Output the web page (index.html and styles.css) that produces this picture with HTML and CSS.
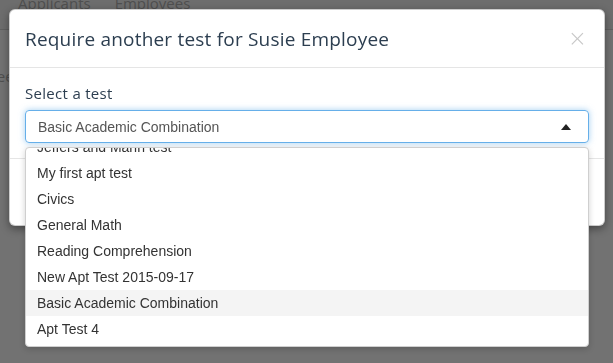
FILE: index.html
```html
<!DOCTYPE html>
<html>
<head>
<meta charset="utf-8">
<link rel="stylesheet" href="styles.css">
</head>
<body>
<div class="page">
  <div class="nav">
    <span class="tab">Applicants</span>
    <span class="tab">Employees</span>
  </div>
  <div class="page-body">
    <div class="page-text">Employee</div>
  </div>
</div>

<div class="modal">
  <div class="modal-header">
    <h4 class="modal-title">Require another test for Susie Employee</h4>
    <span class="close">&times;</span>
  </div>
  <div class="modal-body">
    <label class="label">Select a test</label>
    <div class="select-wrap">
      <div class="select">
        <span class="select-value">Basic Academic Combination</span>
        <svg class="caret" width="10" height="6" viewBox="0 0 10 6"><path d="M0 6 L5 0 L10 6 Z" fill="#222"/></svg>
      </div>
      <div class="dropdown">
        <ul class="options">
          <li>Jeffers and Mann test</li>
          <li>My first apt test</li>
          <li>Civics</li>
          <li>General Math</li>
          <li>Reading Comprehension</li>
          <li>New Apt Test 2015-09-17</li>
          <li class="active">Basic Academic Combination</li>
          <li>Apt Test 4</li>
        </ul>
      </div>
    </div>
  </div>
  <div class="modal-footer"></div>
</div>
</body>
</html>
```

FILE: styles.css
```css
html, body {
  margin: 0;
  padding: 0;
}
body {
  width: 613px;
  height: 363px;
  overflow: hidden;
  background: #727272;
  font-family: "Open Sans", sans-serif;
}
.page {
  height: 363px;
}
.nav {
  height: 29px;
  background: #6d6d6d;
  border-bottom: 1px solid #606060;
  display: flex;
  gap: 24px;
  padding-left: 18px;
  align-items: flex-start;
}
.tab {
  font-size: 15px;
  line-height: 16px;
  margin-top: -5px;
  color: #4f4f4f;
}
.page-body {
  padding-top: 36px;
}
.page-text {
  font-size: 15px;
  color: #4f4f4f;
  margin-left: -55px;
}

.modal {
  position: fixed;
  top: 9px;
  left: 9px;
  width: 596px;
  background: #fff;
  border: 1px solid rgba(0,0,0,0.2);
  border-radius: 6px;
  box-shadow: 0 3px 9px rgba(0,0,0,0.4);
  box-sizing: border-box;
}
.modal-header {
  height: 58px;
  box-sizing: border-box;
  padding: 0 15px;
  display: flex;
  align-items: center;
  justify-content: space-between;
  border-bottom: 1px solid #e5e5e5;
}
.modal-title {
  margin: 0;
  font-size: 19px;
  font-weight: 400;
  color: #2c3e50;
  letter-spacing: 0.2px;
}
.close {
  font-size: 23px;
  color: #c8c8c8;
  font-family: "DejaVu Sans", sans-serif;
  font-weight: 300;
  line-height: 1;
  margin-right: 2px;
}
.modal-body {
  padding: 15px;
}
.label {
  display: block;
  font-size: 15px;
  line-height: 20px;
  color: #2c3e50;
  letter-spacing: 0.3px;
  margin-bottom: 7px;
}
.select-wrap {
  position: relative;
}
.select {
  height: 33px;
  box-sizing: border-box;
  border: 1px solid #66afe9;
  border-radius: 4px;
  box-shadow: 0 0 6px rgba(102,175,233,0.6);
  display: flex;
  align-items: center;
  justify-content: space-between;
  padding: 0 17px 0 12px;
  font-family: "Liberation Sans", Arial, sans-serif;
  font-size: 14px;
  color: #555;
}
.caret {
  display: block;
}
.modal-footer {
  height: 66px;
  border-top: 1px solid #e5e5e5;
}
.dropdown {
  position: absolute;
  top: 37px;
  left: 0;
  right: 0;
  height: 200px;
  box-sizing: border-box;
  background: #fff;
  border: 1px solid #cfcfcf;
  border-radius: 4px;
  box-shadow: 0 2px 6px rgba(0,0,0,0.18);
  overflow: hidden;
  z-index: 2;
}
.options {
  list-style: none;
  margin: -14px 0 0 0;
  padding: 0;
  font-family: "Liberation Sans", Arial, sans-serif;
  font-size: 14px;
  color: #333;
}
.options li {
  height: 26px;
  line-height: 26px;
  padding-left: 11px;
}
.options li.active {
  background: #f4f4f4;
}
```
